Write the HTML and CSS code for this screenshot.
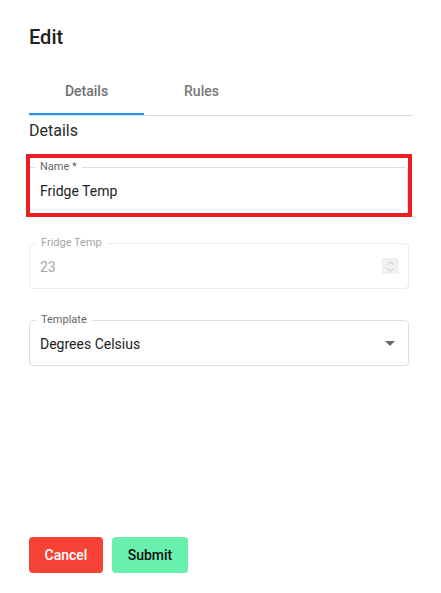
FILE: index.html
```html
<!DOCTYPE html>
<html lang="en">
    <head>
        <meta charset="utf-8">
        <title>Edit</title>
        <link rel="stylesheet" href="styles.css">
    </head>
    <body>
        <div class="page">
            <h1 class="title">Edit</h1>
            <div class="tabs">
                <div class="tab active">Details</div>
                <div class="tab">Rules</div>
            </div>
            <h2 class="section">Details</h2>

            <div class="highlight">
                <div class="field field-top">
                    <span class="label">Name *</span>
                    <span class="value">Fridge Temp</span>
                </div>
            </div>

            <div class="field disabled gap-1">
                <span class="label">Fridge Temp</span>
                <span class="value">23</span>
                <span class="spinner">
                    <svg width="9" height="13" viewBox="0 0 9 13">
                        <path d="M1.5 4.5 L4.5 1.8 L7.5 4.5" fill="none" stroke="#c4c4c4" stroke-width="1"/>
                        <path d="M1.5 8.5 L4.5 11.2 L7.5 8.5" fill="none" stroke="#c4c4c4" stroke-width="1"/>
                    </svg>
                </span>
            </div>

            <div class="field gap-2">
                <span class="label">Template</span>
                <span class="value">Degrees Celsius</span>
                <span class="caret"></span>
            </div>

            <div class="actions">
                <button class="btn cancel">Cancel</button>
                <button class="btn submit">Submit</button>
            </div>
        </div>
    </body>
</html>
```

FILE: styles.css
```css
html, body{
    margin: 0;
    padding: 0;
    background: #fff;
}
*{
    font-family: Roboto, "Liberation Sans", sans-serif;
    box-sizing: border-box;
}
.page{
    height: 593px;
    padding: 25px 28px 20px 29px;
    display: flex;
    flex-direction: column;
}
.title{
    margin: 0;
    font-size: 20px;
    line-height: 24px;
    font-weight: 500;
    color: #212121;
}
.tabs{
    display: flex;
    margin-top: 18px;
    height: 49px;
    border-bottom: 1px solid #dcdcdc;
}
.tab{
    width: 115px;
    height: 48px;
    line-height: 48px;
    text-align: center;
    font-size: 14px;
    font-weight: 500;
    color: #777;
}
.tab.active{
    color: #707070;
    box-shadow: inset 0 -2px 0 #2196f3;
}
.section{
    margin: 5px 0 0;
    font-size: 16px;
    line-height: 20px;
    font-weight: 400;
    color: #2b2b2b;
}
.highlight{
    margin: 13px 1px 0 -3px;
    height: 63px;
    border: 4px solid #ee1d23;
    padding-top: 9px;
}
.field{
    position: relative;
    height: 46px;
    margin-right: 4px;
    border: 1px solid #dedede;
    border-radius: 4px;
    display: flex;
    align-items: center;
    padding: 0 10px;
}
.field-top{
    margin-right: 0;
    border-left: none;
    border-bottom: none;
    border-radius: 0 4px 0 0;
    padding-left: 10px;
}
.gap-1{
    margin-top: 26px;
}
.gap-2{
    margin-top: 31px;
}
.label{
    position: absolute;
    top: -7px;
    left: 6px;
    padding: 0 5px;
    background: #fff;
    font-size: 11px;
    line-height: 12px;
    color: #666;
}
.field-top .label{
    left: 5px;
}
.value{
    flex: 1;
    font-size: 14px;
    color: #222;
    padding-top: 1px;
}
.disabled{
    border-color: #ececec;
}
.disabled .label,
.disabled .value{
    color: #a6a6a6;
}
.spinner{
    width: 17px;
    height: 16px;
    background: #f1f1f1;
    display: flex;
    align-items: center;
    justify-content: center;
    margin-right: -1px;
}
.caret{
    width: 0;
    height: 0;
    border-left: 5px solid transparent;
    border-right: 5px solid transparent;
    border-top: 5px solid #6b6b6b;
    margin-right: 3px;
}
.actions{
    margin-top: auto;
    display: flex;
    gap: 9px;
}
.btn{
    height: 36px;
    border: none;
    border-radius: 4px;
    font-size: 14px;
    font-weight: 500;
    padding: 0;
    cursor: pointer;
}
.cancel{
    width: 74px;
    background: #f44336;
    color: #fff;
}
.submit{
    width: 76px;
    background: #69f0ae;
    color: #111;
}
```
